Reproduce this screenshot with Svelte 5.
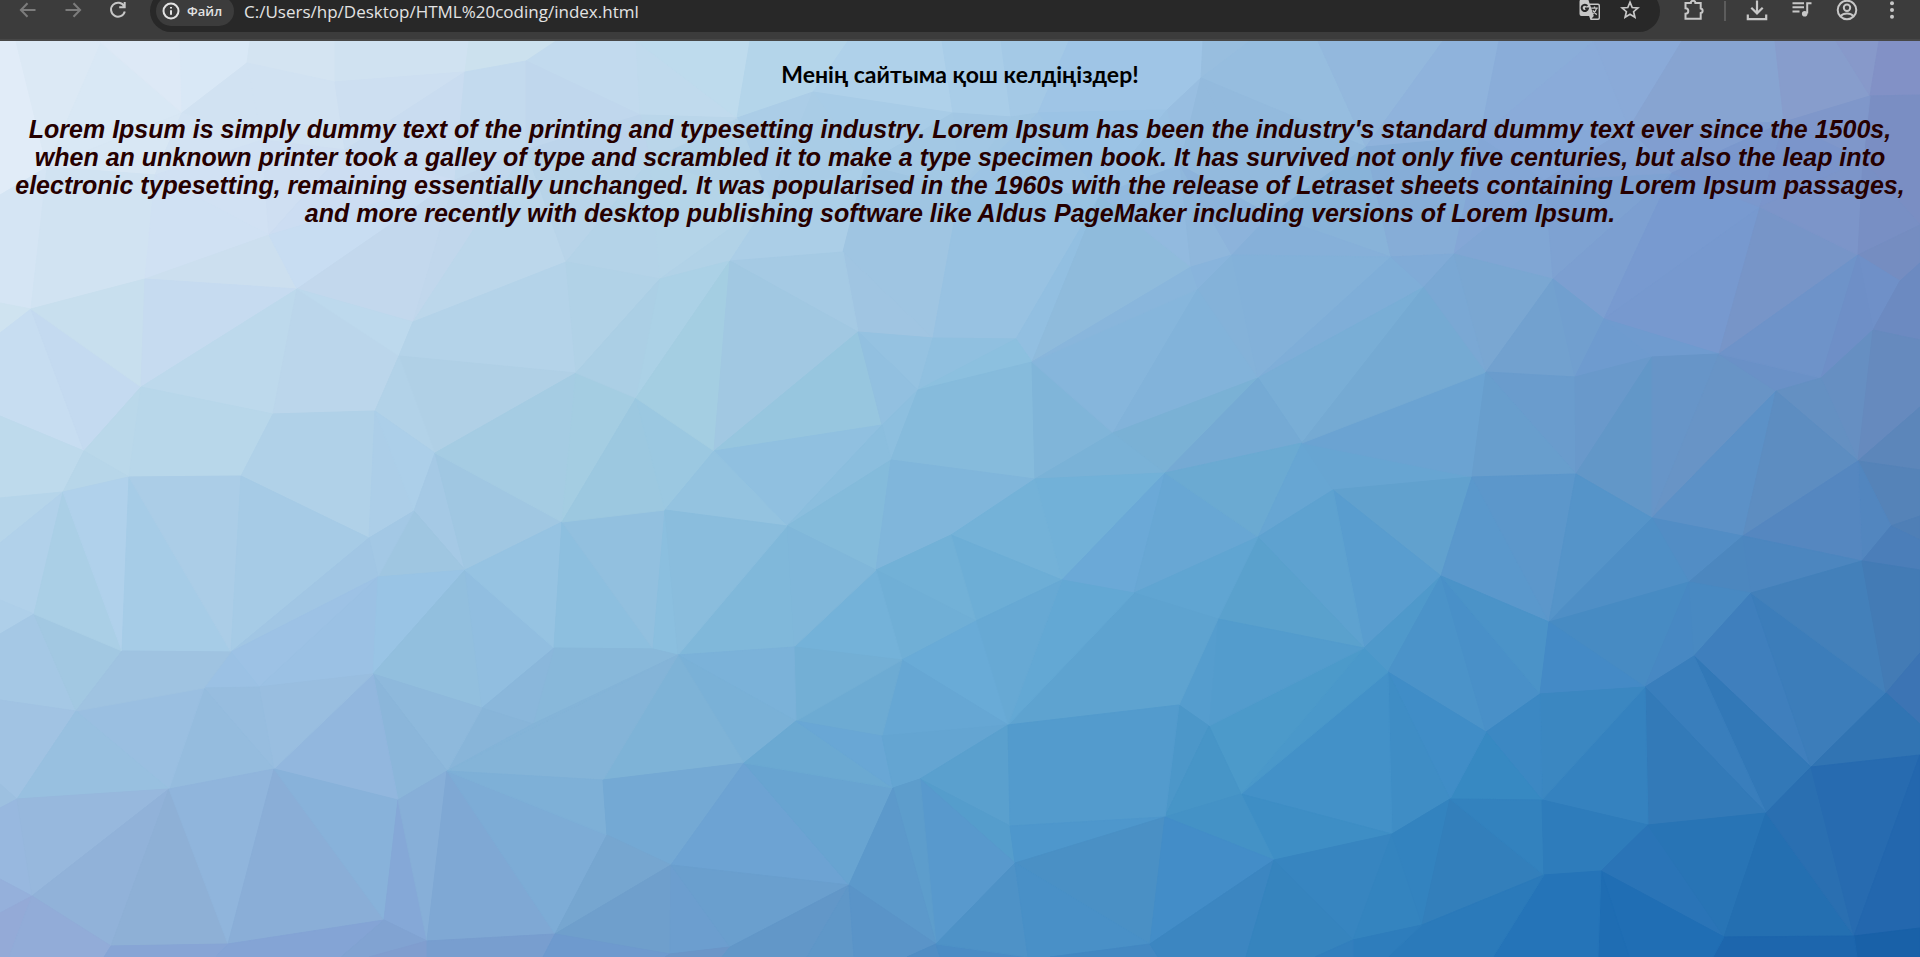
<script>
  // Corner points of the low-poly backdrop, grouped by the band they lie in.
  const bands = {
    T: '0,41 16,41 101,41 180,41 250,41 335,41 469,41 556,41 636,41 750,41 848,41 942,41 1001,41 1069,41 1203,41 1250,41 1318,41 1443,41 1499,41 1594,41 1682,41 1775,41 1836,41 1879,41 1920,41',
    L: '0,195 0,303 0,333 0,416 0,498 0,543 0,600 0,634 0,700 0,784 0,808 0,879 0,913 0,957',
    R: '1920,95 1920,225 1920,263 1920,340 1920,407 1920,470 1920,516 1920,540 1920,570 1920,653 1920,724 1920,755 1920,928 1920,957',
    B: '9,957 104,957 216,957 341,957 369,957 427,957 543,957 665,957 722,957 807,957 854,957 907,957 940,957 1028,957 1050,957 1158,957 1246,957 1315,957 1353,957 1388,957 1493,957 1598,957 1629,957 1713,957 1857,957',
    a: '101,43 247,63 182,113 335,82 465,72 526,61 813,92 953,113 737,118 1201,78 1870,96',
    n: '0,0 262,140 526,150 640,115 1011,117 1038,113 1167,110',
    m: '47,167 155,175 269,235 345,150 455,180 0,0 650,160 770,200 865,165 960,190 1100,195 1180,165 1270,215 1366,147 1480,137 0,0 1545,180 1629,128 1672,173 1760,207 1784,122 1863,160',
    b: '31,309 145,279 297,289 413,322 566,262 399,356 576,373 141,387 273,414 375,411 435,453 84,451 129,477 241,476 63,492 369,538 414,511 562,522 465,570 378,577 636,398',
    c: '660,279 730,261 843,252 858,332 933,338 1016,339 1032,362 918,390 882,425 714,451 665,510 787,526 891,460 1035,479 951,535 876,570 1113,433 1165,473 1062,580 1134,593 1258,537 1258,378 1232,255 1191,267 1198,289',
    d: '1391,257 1454,254 1424,287 1553,279 1604,319 1486,372 1575,377 1652,357 1719,354 1858,255 1900,281 1873,330 1821,378 1776,391 1858,461 1302,443 1333,490 1472,477 1576,474 1652,518 1743,536 1891,526 1862,561 1441,576 1689,582 1751,593',
    e: '34,614 122,651 231,652 76,711 204,688 259,687 373,674 274,769 169,789 17,799 482,708 533,724 554,648 447,771 398,800 603,780 607,835 32,896 111,946 228,944 384,920 427,941 555,934',
    f: '653,649 678,655 794,647 902,660 976,621 796,721 882,736 1008,725 744,763 893,788 920,779 671,865 849,885 1010,826 1015,863 936,944 1165,817 1179,705 1209,726 1218,619 1241,794 1274,860 1150,944 730,947 670,954',
    g: '1364,648 1388,672 1549,622 1486,732 1540,694 1645,687 1694,656 1450,799 1542,800 1392,834 1648,825 1766,813 1811,767 1886,693 1544,875 1601,871 1422,925 1353,940 1724,937 1854,936'
  };

  // Each facet: its corners, then its fill.
  const mesh = `
T0 T1 m0 L0 e1ecf8;T1 a0 m0 dce9f5;a0 a2 m0 d9e8f5;a0 T3 a2 dde9f6;T2 T3 a0 dde9f6;T3 T4 a1 a2 d9e8f6;T4 T5 a3 a1 d4e4f2;T5 T6 a4 a3 d0e2f1;T6 T7 a5 a4 cce1ee
a2 m0 m1 d8e7f4;a2 a1 n1 d1e2f2;a2 n1 m1 d3e3f3;n1 m2 m1 d1e1f3;a1 a3 m3 n1 d1e2f2;n1 m3 m2 cfdff2;a3 a4 m3 cddff1;a4 m4 m3 c9dcf0;m3 m4 m2 ccddf2;a4 a5 n2 m4 c3daee
a5 T7 T8 n3 c2daee;a5 n3 n2 c0d7ed;T8 a8 n3 c0daed;T8 T9 a8 bedbed;T9 T10 a6 a8 b4d5ea;T10 T11 a7 a6 afd1ea;a6 a7 m8 a8cce7;a8 a6 m7 abcde7;a6 m8 m7 a9cce6;a8 m7 m6 b2d2e8;n3 a8 m6 bad6ea;n3 m6 n2 bcd4eb
T11 T12 n4 a7 a9cde8;T12 T13 n5 n4 a4c9e6;T13 T14 a9 n6 n5 9fc5e6;T14 T15 a9 98bedf;n6 a9 m11 98bee1;n5 n6 m10 9bc3e5;n4 n5 m9 a0c6e3;a7 n4 m9 a2c7e4;a7 m9 m8 a3c8e4;n5 m10 m9 9dc4e4;n6 m11 m10 98c0e2
a9 T15 T16 m13 96bddf;a9 m13 m12 93badd;a9 m12 m11 93badd;T16 T17 m13 93b8dd;T17 T18 m14 m13 8fb3dc;T18 T19 m14 8aadd9;T19 m17 m14 8aabd9;T19 T20 m17 8aaad8;T20 T21 m20 m17 87a4d1;T21 T22 a10 m20 879dcc;T22 T23 a10 8799ca;T23 T24 R0 a10 8291c6
a10 R0 R1 m21 7a8ec3;a10 m20 m21 7f97ca;L0 m0 b0 L1 d5e5f4;m0 m1 b1 b0 d1e3f2;m1 m2 b1 d0e1f3;b1 m2 b2 ccdfef;m2 m4 b2 c8ddf2;b2 m4 b3 c3d8ed;m4 n2 b3 c1d7ec;n2 b4 b3 bcd7eb;n2 m6 b4 b8d4e9;m6 c0 b4 b4d3e8;m6 m7 c0 b4d4e8;m7 c1 c0 b1d2e7;m7 m8 c2 c1 abcee7
m8 m9 c4 c2 9fc5e2;c2 c4 c3 a0c5e2;c1 c2 c3 a5cae4;m9 m10 c5 c4 98c2e2;m10 c6 c5 92bfe1;m10 c23 c6 8fbbdc;m10 m11 c23 92badf;m11 c22 c23 8fb7dc;m11 m12 c22 8cb3db;m12 m13 d0 88b3d9;m12 d0 c22 86b0d9;m13 m14 d1 d0 86add7;m14 m16 d1 84a7d6;m14 m17 m16 86a8d8
m16 d3 d1 80a6d4;m16 m18 d3 7ea2d2;m16 m17 m18 83a3d3;m17 m20 m18 819ed0;m18 d4 d3 7c9fd1;m18 m19 d4 789ad0;m18 m20 m19 7b98cd;m19 d8 d4 7799cf;m19 d9 d8 7795c8;m19 m20 m21 7b95cb;m19 m21 d9 7c95c9;m21 R1 d9 788fc4;d9 R1 R2 d10 758dc1;d9 d10 d11 6f90c8;d10 R2 R3 d11 6c8ac1
L1 b0 L2 cfe3f0;L2 b0 b11 L3 c7ddf1;b0 b7 b11 c4daf0;L3 b11 b14 L4 bedaec;L4 b14 L5 b6d5ea;L5 b14 e0 L6 b1d1ea;L6 e0 L7 aecfe9;L7 e0 e3 L8 a5c8e5;e0 e1 e3 a2c8e2;L8 e3 e9 L9 a1c3e3;L9 e9 L10 9dc0e0;L10 e9 e17 L11 98b8df;L11 e17 L12 95b0db
b0 b1 b7 c8dfee;b1 b2 b7 c6dbf0;b7 b2 b8 bdd9ec;b2 b5 b9 b8 bbd6eb;b2 b3 b5 bdd9ed;b3 b4 b6 b5 b4d3e9;b5 b6 b10 b0d0e6;b5 b10 b9 b2d2e8;b11 b7 b12 bad8ea;b7 b8 b13 b12 b8d7ea;b11 b12 b14 b7d6e9;b8 b9 b15 b13 b0d1e8;b9 b16 b15 accee8;b9 b10 b16 accfe9
b10 b18 b16 a5c9e5;b10 b17 b18 a0c7e2;b10 b6 b17 a5cce3;b6 b20 b17 a4cde2;b4 c0 b6 b1d2e7;c0 b20 b6 abcfe5;b16 b18 b19 9fc6e1;b15 b16 b19 a3c8e5;b14 e0 e1 aacfe6;b14 b12 e1 b0d1eb;b12 e2 e1 a6cce7;b12 b13 e2 abcde7;b13 b15 e2 a6cbe6;b15 b19 e2 a1c6e4
b19 e2 e5 9dc2e5;e2 e5 e4 9bc1e4;b19 e6 e5 9bc1e4;b19 b18 e6 99c4e5;b18 e10 e6 92bfde;b18 e12 e10 91bee0;b17 b18 e12 96c3e2;b17 e12 f0 8dbfdf;b17 c10 f0 92c0df;c10 f1 f0 8bbfdf;b20 c10 b17 9cc8e0;b20 c9 c10 9bc8e1
c0 c1 b20 abd1e6;c1 c9 b20 a4cee2;c1 c3 c9 a1c8e2;c3 c8 c9 97c6df;c3 c4 c7 95c2e1;c3 c7 c8 92c0e0;c4 c5 c7 90c0e0;c5 c6 c7 8cc0df;c8 c7 c12 8dbfdf;c9 c8 c11 90c0e0;c9 c11 c10 94c3e0;c8 c12 c11 8bbede;c7 c6 c13 c12 86bbdc;c12 c15 c11 84bbdb;c12 c13 c14 c15 80b6db
c6 c16 c13 80b5d9;c6 c24 c16 86b6dc;c6 c23 c24 89b6dc;c23 c22 c24 88b4dc;c24 c21 c16 82b3da;c24 c22 c21 84b2d9;c22 d0 c21 83b1d9;d0 d2 c21 7faed8;d0 d1 d2 80abd7;c21 d2 d15 79aed6;c21 c17 c16 7ab1d5;c21 d15 c17 75aad4;c16 c17 c13 7ab2d7;c13 c17 c18 72b1d8;c13 c18 c14 74b2d8
c14 f4 c18 6daed6;c14 f4 c15 72b1d7;c15 f4 f3 70afd6;c15 f3 f2 74b2d9;c11 c15 f2 80b7da;c11 f2 f1 80b8da;c10 c11 f1 8abddd;c17 c19 c18 6ba9d7;c17 c20 c19 68a7d4;c17 d15 c20 6baad2;d15 d16 c20 67a6d3;d15 d17 d16 67a5d2;d15 d5 d17 6ba3d2;d2 d5 d15 75aad3
d1 d5 d2 7aa8d4;d1 d3 d5 7aa7d2;d3 d6 d5 72a1cf;d3 d4 d6 719fcf;d4 d7 d6 6e9bcf;d4 d8 d7 6f9bcf;d5 d6 d18 6a9ccd;d5 d18 d17 689ecd;d6 d7 d18 6999cb;d7 d19 d18 6297c8;d7 d8 d19 6795c8;d8 d13 d19 6894c6;d8 d12 d13 6a91c7;d8 d9 d12 6e93c9;d9 d11 d12 6e8fc7
d11 d14 d12 668fc2;d12 d14 d13 6490c2;d13 d20 d19 5c91c7;d13 d14 d20 5d8dc1;d11 R3 R4 d14 668abe;d14 R4 R5 5c86ba;d14 R5 R6 d21 5583b8;d14 d21 d22 5286bf;d14 d22 d20 5587c0;d21 R6 R7 4f7fb6;d21 R7 R8 d22 4b7eb9;d19 d20 d24 528dc5;d20 d25 d24 4c87bf;d20 d22 d25 4c86bf
d16 d17 d23 61a1ce;d16 d23 g0 599dcf;c20 d16 g0 5ea2d0;c20 g0 f19 5aa1cd;c19 c20 f19 60a5d2;d17 g2 d23 5a98cc;d17 d18 g2 5c97cb;d18 d19 g2 5594c9;d19 d24 g2 4f8fc6;d23 g1 g0 4f99cb;d23 g3 g1 4b93c9;d23 g4 g3 4990c8;d23 g2 g4 4b93c8;g2 d24 g5 478bc3;g2 g5 g4 448ac6
d24 g6 g5 4788c3;d24 d25 g6 4889c2;d25 g12 g6 3f7fbd;d25 g13 g12 3c7dba;d25 d22 g13 4380ba;d22 R8 R9 g13 437bb5;g13 R9 R10 3c74b4;g13 R10 R11 g12 3174b3;g6 g12 g11 3278b7;g5 g6 g11 397ebc;g5 g11 g10 337ab8;g5 g10 g8 3582bf;g4 g5 g8 3b87c1;g3 g4 g8 3c88c3;g3 g8 g7 3789c2
g1 g3 g7 408dc7;g1 g7 g9 3f8dc5;g1 f20 g9 4391c8;f20 g9 f21 3e8ec5;g0 g1 f20 4a98ca;f18 g0 f20 4c9aca;f19 g0 f18 539ccd;f17 f19 f18 559dce;f17 f18 f16 4c97c9;f18 f20 f16 4795c7;f16 f20 f21 4492c6;c19 f19 f17 f7 5ea3d0;c18 c19 f7 63a8d4;c18 f7 f4 67a9d4;f4 f7 f3 69abd7
f3 f7 f6 66a7d4;f3 f6 f5 6dabd3;f3 f5 f2 73afd5;f1 f2 f5 7bb2d9;f1 f5 f8 7ab1d7;f1 e15 f8 7eb3d7;e13 f1 e15 84b4d8;e12 f0 f1 e11 88b8da;e10 e12 e11 8ab7db;e10 e11 e13 88b5d9;e11 f1 e13 84b4d8;e6 e10 e13 8eb9dc;e6 e13 e14 8bb6da;e6 e14 e7 92b7de;e5 e6 e7 99bee0
e4 e5 e7 97bddf;e4 e7 e8 95bcde;e3 e4 e8 9abfe1;e1 e2 e4 e3 9fc3e1;e3 e8 e9 98c0e0;e9 e8 e17 97b8dd;e8 e18 e17 91b2d9;e8 e19 e18 8eb0d6;e8 e7 e19 90b5dc;e7 e20 e19 8aaed7;e7 e14 e20 88b2da;e14 e21 e20 85a8d7;e14 e13 e21 87afd8;e13 e22 e21 7fa8d4;e13 e16 e22 7dacd6
e13 e15 e16 7eb0d7;e15 f8 f11 e16 74a9d4;e16 f11 e22 76a6d0;e22 f11 f24 6f9fcc;f8 f12 f11 6da3d3;f8 f9 f12 68a4d1;f5 f9 f8 6ba9d2;f5 f6 f9 69a7d5;f6 f7 f10 f9 64a5d2;f7 f13 f10 5aa0ce;f7 f17 f16 f13 539bcd;f10 f13 f14 559dcc;f10 f14 f15 5899cd;f10 f15 f9 5d9dcc;f9 f15 f12 5c99cb
f13 f16 f14 4e97cc;f14 f16 f22 4a90c5;f16 f21 f22 438dc8;f21 g9 g17 3785c0;L12 e17 B0 L13 94aad7;e17 e18 B1 B0 92acd8;e18 e19 B2 B1 87a5d5;e19 e20 B3 B2 84a4d5;e20 e21 B4 B3 81a3d2;e21 B5 B4 809ecf;e21 e22 B6 B5 789ecf;e22 f24 B7 B6 6e9ace
f11 f23 f24 6c9ecf;f11 f12 f23 6a9fce;f24 f23 B8 B7 6b96c8;f23 f12 B9 B8 6297c8;f12 B10 B9 5f97c8;f12 f15 B11 B10 5a94c8;f15 B12 B11 508dc4;f15 B13 B12 4b8cc5;f15 f14 B13 4e92c7;f14 f22 B14 B13 4990c7;f22 B15 B14 4388c2;f22 f21 B16 B15 3c86c1;f21 g17 B17 B16 3684be
g9 g16 g17 3484bf;g9 g7 g16 3383bf;g7 g14 g16 337fbb;g7 g8 g14 3382be;g8 g10 g15 g14 2e7cbb;g10 g18 g15 2a74b7;g10 g11 g18 2874b5;g11 g19 g18 246fb1;g11 g12 g19 2a6fb1;g12 R11 g19 276bb0;g19 R11 R12 2367ae;g19 R12 R13 B24 1961a8;g18 g19 B24 B23 1d66ad
g15 g18 B23 B22 206eb4;g15 B22 B21 1f6db3;g14 g15 B21 B20 2574b8;g16 g14 B20 B19 2b7aba;g17 g16 B19 B18 2e7dbc;g17 B18 B17 327fbd`;

  const corners = Object.fromEntries(
    Object.entries(bands).map(([name, list]) => [name, list.split(' ')])
  );
  const facets = mesh
    .split(/[;\n]/)
    .filter(Boolean)
    .map((entry) => {
      const parts = entry.trim().split(' ');
      const fill = '#' + parts.pop();
      return { fill, points: parts.map((id) => corners[id[0]][Number(id.slice(1))]).join(' ') };
    });

  let address = $state('C:/Users/hp/Desktop/HTML%20coding/index.html');
</script>

<div class="window">
  <header class="toolbar">
    <nav class="row" aria-label="Toolbar">
      <button class="tool dim" aria-label="Back">
        <svg width="24" height="24" viewBox="0 0 24 24"><path d="M19.500 12H5.500M11.500 5.300L4.900 12l6.600 6.700" /></svg>
      </button>
      <button class="tool dim" aria-label="Forward">
        <svg width="24" height="24" viewBox="0 0 24 24"><path d="M4.500 12h14M12.500 5.300l6.600 6.700-6.600 6.700" /></svg>
      </button>
      <button class="tool" aria-label="Reload">
        <svg width="24" height="24" viewBox="0 0 24 24"><path d="M18.200 8.300A7 7 0 1 0 18.800 13.500M18.700 4v5.200h-5.500" stroke-width="2" /></svg>
      </button>

      <div class="address">
        <button class="chip">
          <svg width="20" height="20" viewBox="0 0 20 20"><circle cx="10" cy="10" r="7.500" /><path d="M10 9.200v4.600M10 5.900v1.700" /></svg>
          <span>Файл</span>
        </button>
        <input type="text" aria-label="Address" spellcheck="false" bind:value={address} />
        <button class="tool inner" aria-label="Translate">
          <svg width="24" height="24" viewBox="0 0 24 24">
            <path class="solid" d="M3.500 1.500h6.800l1.300 4H20a2 2 0 0 1 2 2V20a2 2 0 0 1-2 2h-7.500l-1.400-4H3.500a2 2 0 0 1-2-2V3.500a2 2 0 0 1 2-2z" />
            <path class="cut" d="M12.200 7H19.800a.8.8 0 0 1 .8.8V19.800a.8.8 0 0 1-.8.8H13.600L15.800 18z" />
            <path d="M13.200 10.200h6.600M16.500 8.500v1.700M18.600 10.400c-.7 2.600-2.300 4.500-4.300 5.700M14.800 12.300c.9 1.800 2.300 3.200 4 4.300" stroke-width="1.300" />
            <path class="ink" d="M9.400 7.900A3.200 3.200 0 1 0 10 10.400H7" />
          </svg>
        </button>
        <button class="tool inner" aria-label="Bookmark">
          <svg width="24" height="24" viewBox="0 0 24 24"><path d="M12 4.200l2.200 5.300 5.700.5-4.300 3.700 1.300 5.600L12 16.300l-4.900 3 1.300-5.600L4.100 10l5.700-.5z" stroke-width="1.700" /></svg>
        </button>
      </div>

      <button class="tool" aria-label="Extensions">
        <svg width="24" height="24" viewBox="0 0 24 24"><path d="M3.500 5.100h5.300a2.300 2.300 0 0 1 4.600 0h5.300v5.300a2.400 2.400 0 0 1 0 4.700v5.700H3.500v-5a2.800 2.800 0 0 0 0-5.600z" stroke-width="2" /></svg>
      </button>
      <span class="divider"></span>
      <button class="tool" aria-label="Downloads">
        <svg width="24" height="24" viewBox="0 0 24 24"><path d="M12 2.500v12.500M6.300 9.800L12 15.400l5.700-5.600M2.800 16.500v4.700h18.400v-4.700" stroke-width="2.200" /></svg>
      </button>
      <button class="tool" aria-label="Media">
        <svg width="24" height="24" viewBox="0 0 24 24"><path d="M2.500 5.200h11.500M2.500 9.300h11.500M2.500 13.400h7M17.200 15.500V5.200h4.300" stroke-width="2" /><circle class="solid" cx="14.700" cy="15.700" r="2.800" /></svg>
      </button>
      <button class="tool" aria-label="Profile">
        <svg width="24" height="24" viewBox="0 0 24 24"><circle cx="12" cy="12" r="9.300" /><circle cx="12" cy="9.700" r="3.200" /><path d="M5.300 18.200c3.600-3.700 9.800-3.700 13.400 0" /></svg>
      </button>
      <button class="tool" aria-label="Menu">
        <svg width="24" height="24" viewBox="0 0 24 24"><g class="solid"><circle cx="12" cy="5.200" r="2" /><circle cx="12" cy="12" r="2" /><circle cx="12" cy="18.800" r="2" /></g></svg>
      </button>
    </nav>
  </header>

  <main>
    <svg class="backdrop" viewBox="0 41 1920 916" preserveAspectRatio="xMidYMin slice" aria-hidden="true">
      {#each facets as facet}
        <polygon points={facet.points} fill={facet.fill} stroke={facet.fill} />
      {/each}
    </svg>
    <h1>Менің сайтыма қош келдіңіздер!</h1>
    <p>
      Lorem Ipsum is simply dummy text of the printing and typesetting industry. Lorem Ipsum has been the industry's standard dummy text ever since the 1500s,<br />
      when an unknown printer took a galley of type and scrambled it to make a type specimen book. It has survived not only five centuries, but also the leap into<br />
      electronic typesetting, remaining essentially unchanged. It was popularised in the 1960s with the release of Letraset sheets containing Lorem Ipsum passages,<br />
      and more recently with desktop publishing software like Aldus PageMaker including versions of Lorem Ipsum.
    </p>
  </main>
</div>

<style>
  :global(body) {
    margin: 0;
  }
  .window {
    display: flex;
    flex-direction: column;
    min-height: 100vh;
  }
  .toolbar {
    box-sizing: border-box;
    height: 41px;
    overflow: hidden;
    background: #3c3c3c;
    border-bottom: 2px solid #474747;
  }
  .row {
    display: flex;
    align-items: center;
    height: 42px;
    margin-top: -10px;
    padding: 0 6px 0 5px;
  }
  button {
    border: 0;
    padding: 0;
    background: none;
    color: #c7c7c7;
  }
  .tool {
    display: grid;
    place-items: center;
    width: 45px;
    height: 42px;
    padding-bottom: 2px;
    box-sizing: border-box;
    flex: none;
  }
  .dim {
    color: #7c7c7c;
  }
  .inner {
    width: 40px;
  }
  .tool svg,
  .chip svg {
    fill: none;
    stroke: currentColor;
    stroke-width: 2;
  }
  .tool .solid {
    fill: currentColor;
    stroke: none;
  }
  .tool .cut {
    fill: #282828;
    stroke: none;
  }
  .tool .ink {
    stroke: #282828;
    stroke-width: 2;
  }
  .address {
    display: flex;
    flex: 1;
    align-items: center;
    box-sizing: border-box;
    height: 42px;
    margin: 0 11px 0 10px;
    padding: 0 10px 0 6px;
    border-radius: 21px;
    background: #282828;
  }
  .chip {
    display: flex;
    align-items: center;
    gap: 6px;
    height: 30px;
    padding: 0 12px 0 5px;
    border-radius: 15px;
    background: #3c3c3c;
    color: #e3e3e3;
    font: 600 13px "Open Sans", "Noto Sans", sans-serif;
  }
  input {
    flex: 1;
    min-width: 0;
    border: 0;
    outline: 0;
    padding: 0 10px;
    background: none;
    color: #e3e3e3;
    font: 17px "Open Sans", "Noto Sans", sans-serif;
  }
  .divider {
    width: 2px;
    height: 20px;
    margin: 0 8px;
    background: #5c5c5c;
  }
  main {
    position: relative;
    flex: 1;
    overflow: hidden;
    padding: 19px 8px;
    background: linear-gradient(160deg, #dfeaf6, #7ab1d7 50%, #1961a8);
    text-align: center;
  }
  .backdrop {
    position: absolute;
    inset: 0;
    width: 100%;
    height: 100%;
  }
  h1,
  p {
    position: relative;
    margin: 0;
  }
  h1 {
    color: #000;
    font: 700 23px/28px Lato, "Open Sans", sans-serif;
  }
  p {
    margin-top: 27px;
    color: #260000;
    font: italic 700 25px/28px "Liberation Sans", Arial, sans-serif;
  }
</style>
